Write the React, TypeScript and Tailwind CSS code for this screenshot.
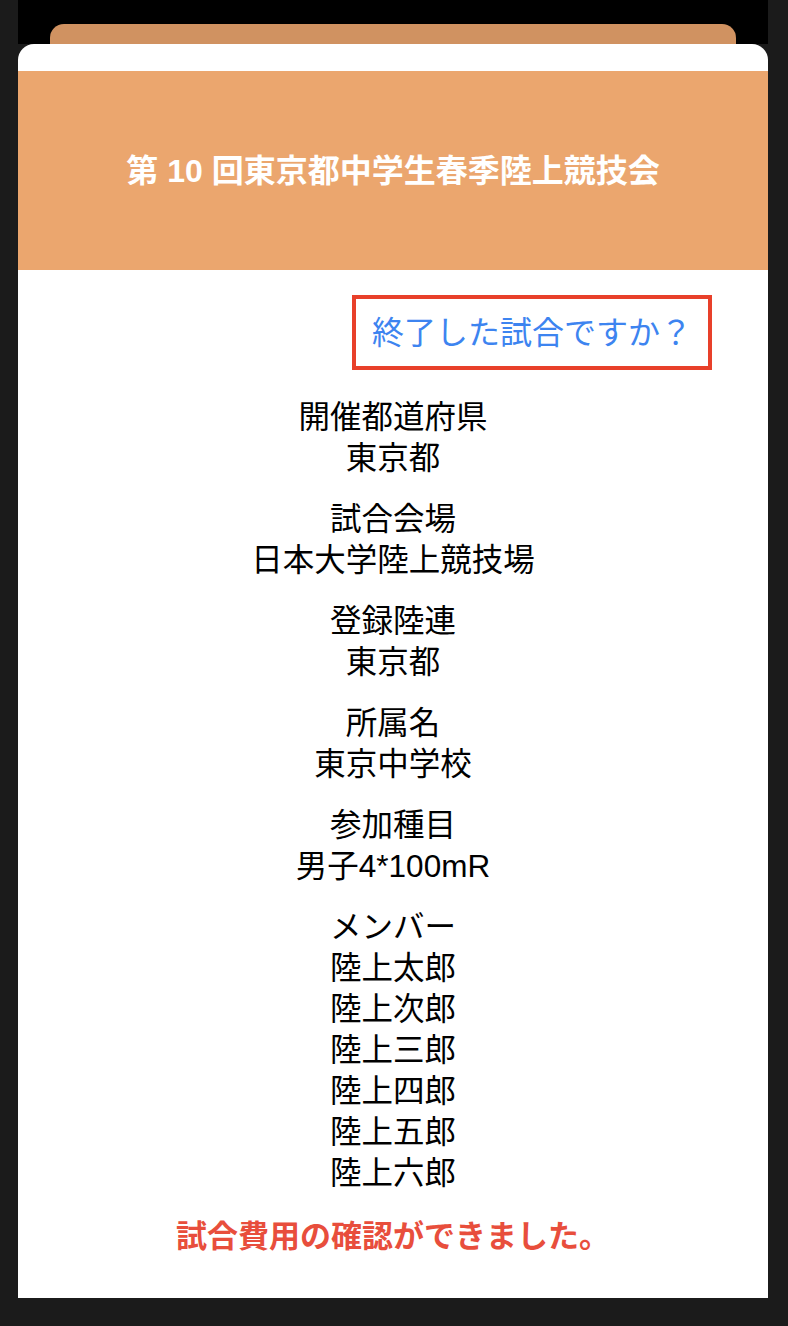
import React from "react";

const sections: { label: string; values: string[] }[] = [
  { label: "開催都道府県", values: ["東京都"] },
  { label: "試合会場", values: ["日本大学陸上競技場"] },
  { label: "登録陸連", values: ["東京都"] },
  { label: "所属名", values: ["東京中学校"] },
  { label: "参加種目", values: ["男子4*100mR"] },
  { label: "メンバー", values: ["陸上太郎", "陸上次郎", "陸上三郎", "陸上四郎", "陸上五郎", "陸上六郎"] },
];

export default function App() {
  return (
    <div
      className="w-[788px] h-[1326px] bg-[#1b1b1b] pl-[18px] pr-[20px] overflow-hidden"
      style={{ fontFamily: '"Liberation Sans", "Noto Sans CJK JP", sans-serif' }}
    >
      {/* Stacked card behind */}
      <div className="bg-black pt-[24px] pl-[32px] pr-[32px]">
        <div className="h-[20px] bg-[#d09261] rounded-t-[14px]" />
      </div>

      {/* Modal */}
      <div className="bg-white rounded-t-[16px] h-[1254px] pt-[27px] flex flex-col">
        <div className="h-[199px] bg-[#eba66e] flex items-center justify-center">
          <h1 className="text-white font-bold text-[32px] leading-none">第 10 回東京都中学生春季陸上競技会</h1>
        </div>

        <div className="flex justify-end pr-[56px] pt-[25px]">
          <button className="w-[360px] h-[75px] border-4 border-[#e8402a] text-[#3d84f0] text-[32px] leading-none flex items-center justify-center">
            終了した試合ですか？
          </button>
        </div>

        <div className="flex flex-col items-center gap-[20px] pt-[27px] text-black text-[31.5px] leading-[41px]">
          {sections.map((s) => (
            <div key={s.label} className="flex flex-col items-center">
              <span>{s.label}</span>
              {s.values.map((v, i) => (
                <span key={i}>{v}</span>
              ))}
            </div>
          ))}
        </div>

        <p className="text-center text-[#e84e3c] font-bold text-[31px] leading-[41px] mt-[22px]">
          試合費用の確認ができました。
        </p>
      </div>
    </div>
  );
}
